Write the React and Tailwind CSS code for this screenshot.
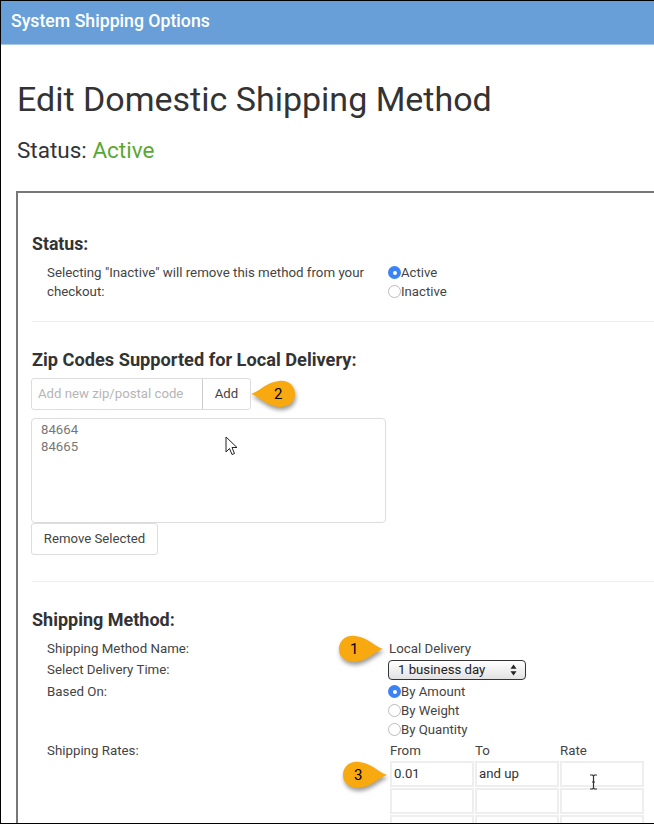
function Callout({ n, className, flip }) {
  return (
    <div className={`absolute h-[28px] w-[47px] ${className}`}>
      <svg width="47" height="28" viewBox="0 0 50 30" className="absolute left-0 top-0 drop-shadow-[1px_3px_2px_rgba(0,0,0,0.4)]">
        <path
          d={flip ? "M1 15 C10 12 18 2 31 1 C42 0 48 7 48 15 C48 23 42 29 31 29 C18 28 10 18 1 15 Z" : "M49 15 C40 12 32 2 19 1 C8 0 2 7 2 15 C2 23 8 29 19 29 C32 28 40 18 49 15 Z"}
          fill="#f7a90f"
        />
      </svg>
      <span className={`absolute top-[4px] text-[15px] leading-[20px] text-black ${flip ? "left-[24px]" : "left-[13px]"}`}>{n}</span>
    </div>
  );
}

function Radio({ checked, label }) {
  return (
    <div className="flex h-[19px] items-center text-[13.2px] text-[#444]">
      {checked ? (
        <span className="flex h-[13px] w-[13px] items-center justify-center rounded-full bg-[#3b82f6]">
          <span className="h-[4px] w-[4px] rounded-full bg-white" />
        </span>
      ) : (
        <span className="h-[13px] w-[13px] rounded-full border border-[#bbb] bg-white" />
      )}
      <span>{label}</span>
    </div>
  );
}

function RateCell({ value }) {
  return (
    <div className="flex h-[26px] w-[84px] items-center border-2 border-[#eee] bg-white pl-[2px] text-[13.2px] text-[#333]">
      {value}
    </div>
  );
}

export default function App() {
  return (
    <div className="relative h-[824px] w-[654px] overflow-hidden border-y border-l border-black bg-white font-['Roboto',sans-serif] text-[#333]">
      <div className="flex h-[44px] items-center border-b border-[#a9c9ea] bg-[#689fd8] pb-[2px] pl-[10px] text-[17.7px] font-medium text-white">
        System Shipping Options
      </div>

      <div className="pl-[15px]">
        <h1 className="mt-[31px] pl-[1px] text-[34px] leading-[46px] font-normal text-[#333]">Edit Domestic Shipping Method</h1>
        <p className="mt-[13px] pl-[1px] text-[22.5px] leading-[30px]">
          Status: <span className="text-[#5aa832]">Active</span>
        </p>

        <div className="mt-[26px] w-[700px] border-2 border-[#777] pl-[14px] pt-[41px]">
          <h2 className="text-[17.7px] leading-[20px] font-bold text-[#333]">Status:</h2>
          <div className="mt-[9px] flex pl-[15px]">
            <p className="w-[341px] text-[13.3px] leading-[19px] text-[#444]">
              Selecting "Inactive" will remove this method from your
              <br />
              checkout:
            </p>
            <div>
              <Radio checked label="Active" />
              <Radio label="Inactive" />
            </div>
          </div>
          <div className="mt-[20px] border-t border-[#eee]" />

          <h2 className="mt-[27px] text-[18.2px] leading-[22px] font-bold text-[#333]">Zip Codes Supported for Local Delivery:</h2>
          <div className="mt-[7px] -ml-[1px] flex h-[32px] w-[220px] rounded-[3px] border border-[#ddd]">
            <div className="flex w-[171px] items-center border-r border-[#ccc] pl-[6px] text-[13.2px] whitespace-nowrap text-[#b5b5b5]">
              Add new zip/postal code
            </div>
            <div className="flex flex-1 items-center justify-center text-[13.2px] text-[#444]">Add</div>
          </div>
          <div className="mt-[8px] -ml-[1px] h-[105px] w-[355px] rounded-[4px] border border-[#ddd] pl-[9px] pt-[2px] text-[13.2px] leading-[17px] text-[#777]">
            84664
            <br />
            84665
          </div>
          <div className="-ml-[1px] flex h-[32px] w-[127px] items-center justify-center rounded-[3px] border border-[#ddd] text-[13.2px] text-[#444]">
            Remove Selected
          </div>
          <div className="mt-[26px] border-t border-[#eee]" />

          <h2 className="mt-[28px] text-[18px] leading-[20px] font-bold text-[#333]">Shipping Method:</h2>
          <div className="mt-[9px] grid grid-cols-[341px_1fr] pl-[15px] text-[13.3px] text-[#444]">
            <div className="leading-[19px]">Shipping Method Name:</div>
            <div className="pl-[1px] leading-[19px]">Local Delivery</div>
            <div className="mt-[2px] leading-[20px]">Select Delivery Time:</div>
            <div className="mt-[2px] flex h-[20px] w-[138px] items-center justify-between rounded-[4px] border border-[#333] bg-gradient-to-b from-white to-[#e2e2e2] pl-[9px] pr-[8px] text-[13.2px] text-[#222]">
              <span>1 business day</span>
              <svg width="7" height="12" viewBox="0 0 7 12" fill="#222">
                <path d="M3.5 0.5 L6.5 4.8 H0.5 Z M3.5 11.5 L6.5 7.2 H0.5 Z" />
              </svg>
            </div>
            <div className="mt-[2px] leading-[19px]">Based On:</div>
            <div className="mt-[2px]">
              <Radio checked label="By Amount" />
              <Radio label="By Weight" />
              <Radio label="By Quantity" />
            </div>
            <div className="mt-[2px] leading-[19px]">Shipping Rates:</div>
            <div className="mt-[2px]">
              <div className="grid w-[256px] grid-cols-[85px_85px_85px] pl-[2px] leading-[19px]">
                <span>From</span>
                <span>To</span>
                <span>Rate</span>
              </div>
              <div className="mt-[1px] grid w-[256px] grid-cols-[85px_85px_85px] gap-y-[1px] pl-[2px]">
                <RateCell value="0.01" />
                <RateCell value="and up" />
                <RateCell />
                <RateCell />
                <RateCell />
                <RateCell />
                <RateCell />
                <RateCell />
                <RateCell />
              </div>
            </div>
          </div>
        </div>
      </div>

      <Callout n="2" flip className="left-[249px] top-[379px]" />
      <Callout n="1" className="left-[336px] top-[634px]" />
      <Callout n="3" className="left-[340px] top-[760px]" />

      {/* mouse pointer */}
      <svg width="14" height="20" viewBox="0 0 14 20" className="absolute left-[224px] top-[435px]">
        <path d="M1 1 L1 16 L4.5 12.5 L7 18.5 L9.5 17.5 L7 11.5 L12 11.5 Z" fill="#fff" stroke="#222" strokeWidth="1" />
      </svg>
      {/* text cursor */}
      <svg width="9" height="16" viewBox="0 0 9 16" className="absolute left-[588px] top-[773px]">
        <path d="M1 1 H3.5 L4.5 2 L5.5 1 H8 M4.5 2 V14 M1 15 H3.5 L4.5 14 L5.5 15 H8 M3 8 H6" fill="none" stroke="#333" strokeWidth="1.2" />
      </svg>
    </div>
  );
}
